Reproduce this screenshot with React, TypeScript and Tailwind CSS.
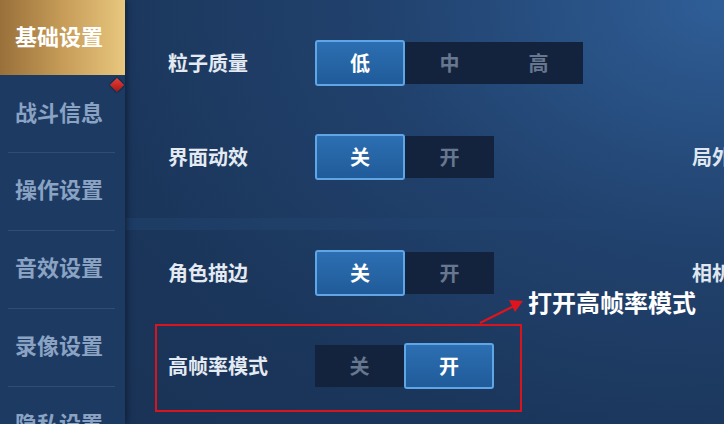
import React from 'react';

const FONT = { fontFamily: '"Noto Sans CJK SC", "Noto Sans", sans-serif' };

const MENU = ['基础设置', '战斗信息', '操作设置', '音效设置', '录像设置', '隐私设置'];

interface SegProps {
  options: string[];
  active: number;
  width: number;
}

const Segmented: React.FC<SegProps> = ({ options, active, width }) => (
  <div className="flex h-[42px] shrink-0 bg-[#14233d]" style={{ width }}>
    {options.map((opt, i) =>
      i === active ? (
        <div
          key={opt}
          className="-my-[2px] flex w-[90px] items-center justify-center rounded-[3px] border-2 border-[#5fa6e6] bg-gradient-to-b from-[#2c6fb2] to-[#205b9a] text-[20px] font-bold text-white"
        >
          {opt}
        </div>
      ) : (
        <div key={opt} className="flex w-[89px] items-center justify-center text-[20px] font-bold text-[#67778f]">
          {opt}
        </div>
      )
    )}
  </div>
);

const Row: React.FC<{ label: string; children: React.ReactNode; side?: string; className?: string }> = ({
  label,
  children,
  side,
  className = '',
}) => (
  <div className={`flex h-[46px] shrink-0 items-center ${className}`}>
    <div className="w-[147px] shrink-0 text-[20px] font-bold text-[#e4eaf2]">{label}</div>
    {children}
    {side && <div className="ml-[198px] shrink-0 whitespace-nowrap text-[20px] font-bold text-[#dfe6ef]">{side}</div>}
  </div>
);

export default function App() {
  return (
    <div className="relative flex h-[424px] w-[724px] overflow-hidden bg-[#1b355a]" style={FONT}>
      {/* sidebar */}
      <div className="relative flex w-[125px] shrink-0 flex-col bg-[#1d3a63] shadow-[2px_0_6px_rgba(8,18,36,0.6)]">
        {MENU.map((m, i) => (
          <div
            key={m}
            className={`relative flex shrink-0 items-center pb-[5px] pl-[15px] text-[22px] font-bold ${
              i === 0
                ? 'h-[75px] bg-gradient-to-r from-[#99703a] via-[#c69c58] to-[#e8c77e] text-white'
                : i === 1
                ? 'h-[77px] text-[#8ba3c3]'
                : 'h-[78px] text-[#8ba3c3]'
            }`}
          >
            {i > 1 && <div className="absolute left-[8px] right-[10px] top-0 h-px bg-[#2f4d76]" />}
            {m}
          </div>
        ))}
        <div className="absolute left-[112px] top-[80px] h-[10px] w-[10px] rotate-45 bg-gradient-to-br from-[#e8403a] to-[#a8140f] shadow-[0_0_2px_#000]" />
      </div>

      {/* main */}
      <div className="flex min-w-0 flex-1 flex-col bg-[radial-gradient(ellipse_at_top_right,#2f5e97_0%,#21426e_40%,#1b365b_75%,#1a3357_100%)] pl-[43px]">
        <Row label="粒子质量" className="mt-[40px]">
          <Segmented options={['低', '中', '高']} active={0} width={268} />
        </Row>
        <Row label="界面动效" side="局外" className="mt-[48px]">
          <Segmented options={['关', '开']} active={0} width={179} />
        </Row>
        <div className="-ml-[43px] mt-[38px] h-[12px] shrink-0 bg-[#214370]/50" />
        <Row label="角色描边" side="相机" className="mt-[20px]">
          <Segmented options={['关', '开']} active={0} width={179} />
        </Row>
        <Row label="高帧率模式" className="mt-[47px]">
          <Segmented options={['关', '开']} active={1} width={179} />
        </Row>
      </div>

      {/* annotation */}
      <div className="pointer-events-none absolute left-[155px] top-[324px] h-[88px] w-[367px] border-2 border-[#d8141c]" />
      <svg className="pointer-events-none absolute left-[476px] top-[296px]" width="52" height="32" viewBox="0 0 52 32">
        <line x1="4" y1="27" x2="38" y2="10" stroke="#e0141c" strokeWidth="2.2" />
        <polygon points="47,5 33,4 39,16" fill="#e0141c" />
      </svg>
      <div className="absolute left-[528px] top-[287px] text-[24px] font-bold leading-[30px] text-white">打开高帧率模式</div>
    </div>
  );
}
